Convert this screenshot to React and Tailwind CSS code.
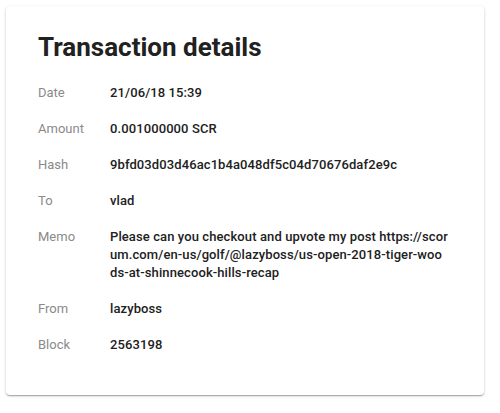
const rows = [
  ['Date', '21/06/18 15:39'],
  ['Amount', '0.001000000 SCR'],
  ['Hash', '9bfd03d03d46ac1b4a048df5c04d70676daf2e9c'],
  ['To', 'vlad'],
  [
    'Memo',
    'Please can you checkout and upvote my post https://scorum.com/en-us/golf/@lazyboss/us-open-2018-tiger-woods-at-shinnecook-hills-recap',
  ],
  ['From', 'lazyboss'],
  ['Block', '2563198'],
]

export default function App() {
  return (
    <div className="min-h-[413px] w-[500px] bg-white p-[6px]" style={{ fontFamily: 'Roboto, "Noto Sans", sans-serif' }}>
      <div className="w-[478px] rounded bg-white px-8 pt-[25px] pb-[32px] shadow-[0_1px_3px_rgba(0,0,0,0.2),0_1px_1px_rgba(0,0,0,0.14),0_2px_1px_-1px_rgba(0,0,0,0.12)]">
        <h1 className="mb-3 text-[26px] leading-8 font-bold text-[#212121]">Transaction details</h1>
        <div className="flex flex-col">
          {rows.map(([label, value]) => (
            <div key={label} className="flex py-[9px] text-[13px] leading-[18px]">
              <div className="w-[72px] shrink-0 text-[#8a8a8a]">{label}</div>
              <div className="w-[339px] break-all font-medium tracking-[0.1px] text-[#212121]">{value}</div>
            </div>
          ))}
        </div>
      </div>
    </div>
  )
}
